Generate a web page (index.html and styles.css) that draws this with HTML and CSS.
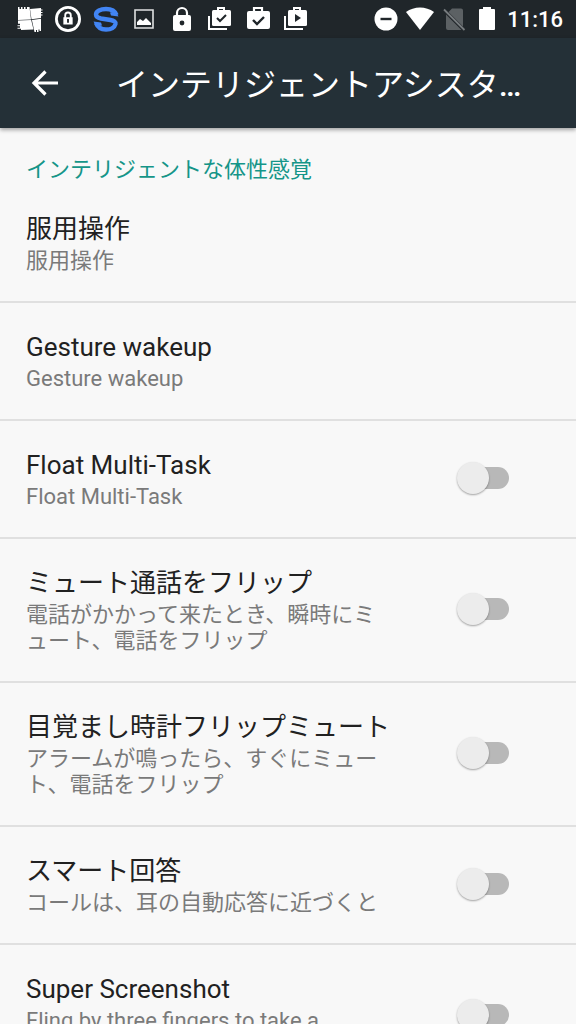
FILE: index.html
```html
<!DOCTYPE html>
<html lang="ja">
<head>
<meta charset="utf-8">
<meta name="viewport" content="width=device-width, initial-scale=1">
<title>インテリジェントアシスタント</title>
<link rel="stylesheet" href="styles.css">
</head>
<body>
<div class="screen">
  <div class="status-bar">
    <div class="status-group notifications">
      <svg class="status-icon" viewBox="0 0 26 26" aria-hidden="true">
        <path fill="#fff" d="M1 4V1h1.500v2H4V1h1.500v2H7V1h1.500v2H10V1h2.500l1.500 12.500L1 14z M13 3l11-1v1.500h1.500v1H24v1.500h1.500v1H24V8.500h1.500v1H24V12l-9.500 1.200z M1 14.600l13.200-.6 2.300 9.500-12.500.5v-1.200H.5v-1H3v-1.500H.5v-1H3v-1.500H1z M14.900 13.900l9.100-1.200V25h-1.500v-1.500h-1V26H20v-2h-1v2h-1.500z"/>
      </svg>
      <svg class="status-icon" viewBox="0 0 28 28" aria-hidden="true">
        <circle cx="14" cy="14" r="12.500" fill="none" stroke="#fff" stroke-width="3"/>
        <path d="M11 13v-3a3 3 0 0 1 6 0v3" fill="none" stroke="#fff" stroke-width="2"/>
        <path fill="#fff" fill-rule="evenodd" d="M9 12h10v8H9z M13 14h2v4h-2z"/>
      </svg>
      <svg class="status-icon" viewBox="0 0 26 26" aria-hidden="true">
        <path d="M23.500 9C22 5 18 3 13 3 7.500 3 3 5 3 8.500c0 2.500 2.500 3.500 5 4l9.500 1.500c3.500.6 5.500 2 5 4C21.500 21.500 17.500 23.500 13 23.500 8 23.500 4.500 21 3 17" fill="none" stroke="#4285f4" stroke-width="4.400"/>
        <path d="M.5 15.500L8 16.500l1 3-6 1z" fill="#4285f4"/>
        <path d="M25.500 10.500L18 9.500l-1-3 6-1z" fill="#4285f4"/>
      </svg>
      <svg class="status-icon" viewBox="0 0 26 26" aria-hidden="true">
        <path d="M4 4h18v18H4z" fill="none" stroke="#dfe1e2" stroke-width="1.6"/>
        <path fill="#fff" d="M6 19v-3l3-3 3 2 3-3 5 5v2z"/>
      </svg>
      <svg class="status-icon" viewBox="0 0 26 26" aria-hidden="true">
        <path d="M8 11V7a5 5 0 0 1 10 0v4" fill="none" stroke="#fff" stroke-width="2.2"/>
        <rect x="4" y="9" width="18" height="16" rx="2" fill="#fff"/>
        <circle cx="13" cy="17" r="2.4" fill="#20262a"/>
      </svg>
      <svg class="status-icon" viewBox="0 0 26 26" aria-hidden="true">
        <path d="M2 10v13h18" fill="none" stroke="#fff" stroke-width="2"/>
        <path d="M11 5V2h6v3" fill="none" stroke="#fff" stroke-width="2"/>
        <rect x="5" y="4" width="19" height="16" rx="1.5" fill="#fff"/>
        <path d="M10 12l3 3 6-6" fill="none" stroke="#20262a" stroke-width="2"/>
      </svg>
      <svg class="status-icon" viewBox="0 0 26 26" aria-hidden="true">
        <path d="M9 6V2h8v4" fill="none" stroke="#fff" stroke-width="2.2"/>
        <rect x="2" y="5" width="23" height="18" rx="2" fill="#fff"/>
        <path d="M8 14l4 4 7-7" fill="none" stroke="#20262a" stroke-width="2.4"/>
      </svg>
      <svg class="status-icon" viewBox="0 0 26 26" aria-hidden="true">
        <path d="M2 10v13h18" fill="none" stroke="#fff" stroke-width="2"/>
        <path d="M11 5V2h6v3" fill="none" stroke="#fff" stroke-width="2"/>
        <rect x="5" y="4" width="19" height="16" rx="1.5" fill="#fff"/>
        <path d="M12 8l6 4-6 4z" fill="#20262a"/>
      </svg>
    </div>
    <div class="status-group system">
      <svg class="status-icon" viewBox="0 0 26 26" aria-hidden="true">
        <circle cx="13" cy="13" r="11.5" fill="#fff"/>
        <path d="M7.500 13h11" stroke="#20262a" stroke-width="2.4"/>
      </svg>
      <svg class="status-icon wide" viewBox="0 0 28 26" aria-hidden="true">
        <path fill="#fff" d="M0 6C8 0 20 0 28 6L14 24z"/>
      </svg>
      <svg class="status-icon" viewBox="0 0 26 26" aria-hidden="true">
        <path fill="#5c6164" d="M11 2.500h9a2 2 0 0 1 2 2v16L7.500 6z M5 8.500L20.500 24H7a2 2 0 0 1-2-2z"/>
        <path d="M3 3.500l20.500 20.500" stroke="#777c7f" stroke-width="1.8"/>
      </svg>
      <svg class="status-icon" viewBox="0 0 26 26" aria-hidden="true">
        <path fill="#fff" d="M9 1h8v2h3q1 0 1 1v19q0 1-1 1H6q-1 0-1-1V4q0-1 1-1h3z"/>
      </svg>
      <time class="clock">11:16</time>
    </div>
  </div>

  <header class="app-bar">
    <button class="back" type="button" aria-label="戻る">
      <svg class="back-icon" viewBox="0 0 28 28" aria-hidden="true">
        <path d="M27 14H3M14.500 2.500L3 14l11.500 11.500" fill="none" stroke="#fff" stroke-width="3.200"/>
      </svg>
    </button>
    <h1 class="title">インテリジェントアシスタ<span class="more">…</span></h1>
  </header>

  <main class="settings">
    <h2 class="category">インテリジェントな体性感覚</h2>
    <a class="row" href="#">
      <span class="text"><span class="name">服用操作</span><span class="summary">服用操作</span></span>
    </a>
    <a class="row" href="#">
      <span class="text"><span class="name">Gesture wakeup</span><span class="summary">Gesture wakeup</span></span>
    </a>
    <label class="row">
      <span class="text"><span class="name">Float Multi-Task</span><span class="summary">Float Multi-Task</span></span>
      <input class="switch" type="checkbox" role="switch">
    </label>
    <label class="row">
      <span class="text"><span class="name">ミュート通話をフリップ</span><span class="summary">電話がかかって来たとき、瞬時にミュート、電話をフリップ</span></span>
      <input class="switch" type="checkbox" role="switch">
    </label>
    <label class="row">
      <span class="text"><span class="name">目覚まし時計フリップミュート</span><span class="summary">アラームが鳴ったら、すぐにミュート、電話をフリップ</span></span>
      <input class="switch" type="checkbox" role="switch">
    </label>
    <label class="row">
      <span class="text"><span class="name">スマート回答</span><span class="summary">コールは、耳の自動応答に近づくと</span></span>
      <input class="switch" type="checkbox" role="switch">
    </label>
    <label class="row">
      <span class="text"><span class="name">Super Screenshot</span><span class="summary">Fling by three fingers to take a screenshot</span></span>
      <input class="switch" type="checkbox" role="switch">
    </label>
  </main>
</div>
</body>
</html>
```

FILE: styles.css
```css
* {
  box-sizing: border-box;
}

body {
  margin: 0;
  background: #f8f8f8;
  color: #212121;
  font-family: Roboto, "Noto Sans CJK JP", sans-serif;
}

.screen {
  display: flex;
  flex-direction: column;
  height: 100vh;
  overflow: hidden;
}

.status-bar {
  flex: none;
  display: flex;
  align-items: center;
  justify-content: space-between;
  height: 38px;
  padding: 0 13px 0 17px;
  background: #20262a;
  color: #fff;
}

.status-group {
  display: flex;
  align-items: center;
}

.notifications {
  gap: 12px;
}

.system {
  gap: 7px;
}

.status-icon {
  display: block;
  width: 26px;
  height: 26px;
}

.status-icon.wide {
  width: 28px;
}

.clock {
  padding-top: 2px;
  font-size: 22px;
  font-weight: 500;
  line-height: 36px;
}

.app-bar {
  flex: none;
  position: relative;
  display: flex;
  align-items: center;
  gap: 57px;
  height: 90px;
  padding: 0 48px 0 31px;
  background: #243037;
  color: #fff;
  box-shadow: 0 2px 4px rgba(0, 0, 0, 0.35);
}

.back {
  flex: none;
  padding: 0;
  border: 0;
  background: none;
}

.back-icon {
  display: block;
  width: 28px;
  height: 28px;
}

.title {
  flex: 1;
  min-width: 0;
  margin: 0;
  padding-top: 4px;
  font-size: 32px;
  font-weight: 400;
  line-height: 48px;
  white-space: nowrap;
}

.more {
  font-weight: 500;
}

.settings {
  flex: 1;
  min-height: 0;
  overflow: hidden;
}

.category {
  margin: 0;
  padding: 27px 26px 0;
  color: #159588;
  font-size: 22px;
  font-weight: 400;
  line-height: 30px;
}

.row {
  display: flex;
  align-items: center;
  gap: 61px;
  padding: 25px 67px 27px 26px;
  border-bottom: 2px solid #e0e0e0;
  color: inherit;
  text-decoration: none;
}

.text {
  flex: 1;
  min-width: 0;
}

.name,
.summary {
  display: block;
}

.name {
  font-size: 26px;
  line-height: 38px;
}

.summary {
  color: #7a7a7a;
  font-size: 22px;
  line-height: 26px;
  line-break: loose;
}

.switch {
  appearance: none;
  flex: none;
  display: grid;
  align-items: center;
  width: 52px;
  height: 32px;
  margin: 0;
}

.switch::before,
.switch::after {
  content: "";
  grid-area: 1 / 1;
}

.switch::before {
  justify-self: end;
  width: 40px;
  height: 22px;
  border-radius: 11px;
  background: #b8b8b8;
}

.switch::after {
  justify-self: start;
  width: 32px;
  height: 32px;
  border-radius: 50%;
  background: #ececec;
  box-shadow: 0 1px 2px rgba(0, 0, 0, 0.35);
}

.switch:checked::before {
  background: #8accc6;
}

.switch:checked::after {
  justify-self: end;
  background: #159588;
}
```
